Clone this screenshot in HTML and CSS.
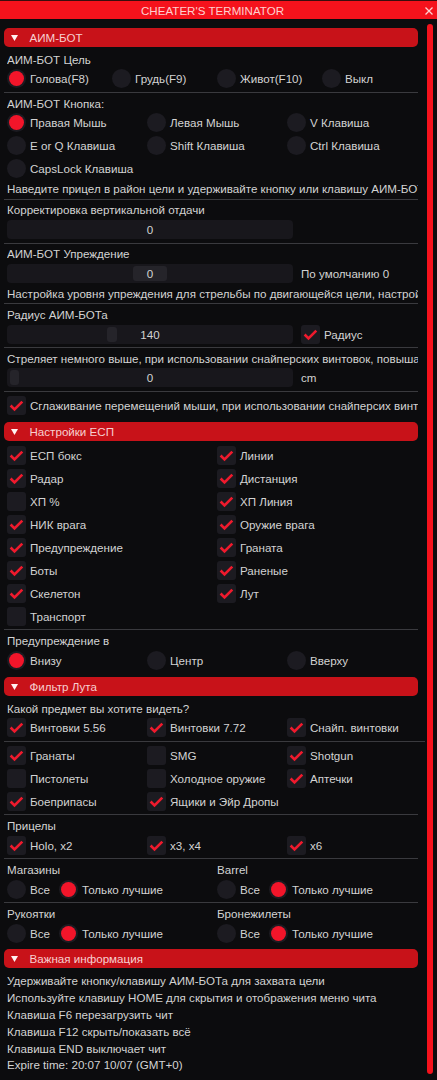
FILE: index.html
```html
<!DOCTYPE html>
<html lang="ru">
<head>
<meta charset="utf-8">
<title>CHEATER'S TERMINATOR</title>
<link rel="stylesheet" href="styles.css">
</head>
<body>
<div class="win">
  <div class="titlebar">
    <span class="title">CHEATER'S TERMINATOR</span>
    <svg class="close" width="8" height="8" viewBox="0 0 8 8"><path d="M0.5 0.5 L7.5 7.5 M7.5 0.5 L0.5 7.5" stroke="#ffd2d2" stroke-width="1.3" fill="none"/></svg>
  </div>
  <div class="body">
    <div class="content">

      <div class="hdr first"><svg class="arrow" width="7" height="6" viewBox="0 0 7 6"><polygon points="0,0 7,0 3.5,6" fill="#fff2f2"/></svg><span class="hdr-text">АИМ-БОТ</span></div>
      <div class="label after-hdr">АИМ-БОТ Цель</div>
      <div class="row c4">
        <div class="opt"><span class="radio on"></span>Голова(F8)</div>
        <div class="opt"><span class="radio"></span>Грудь(F9)</div>
        <div class="opt"><span class="radio"></span>Живот(F10)</div>
        <div class="opt"><span class="radio"></span>Выкл</div>
      </div>
      <div class="sep"></div>
      <div class="label">АИМ-БОТ Кнопка:</div>
      <div class="grid c3">
        <div class="opt"><span class="radio on"></span>Правая Мышь</div>
        <div class="opt"><span class="radio"></span>Левая Мышь</div>
        <div class="opt"><span class="radio"></span>V Клавиша</div>
        <div class="opt"><span class="radio"></span>E or Q Клавиша</div>
        <div class="opt"><span class="radio"></span>Shift Клавиша</div>
        <div class="opt"><span class="radio"></span>Ctrl Клавиша</div>
        <div class="opt"><span class="radio"></span>CapsLock Клавиша</div>
      </div>
      <div class="label">Наведите прицел в район цели и удерживайте кнопку или клавишу АИМ-БОТа для захвата цели</div>
      <div class="sep"></div>
      <div class="label">Корректировка вертикальной отдачи</div>
      <div class="slider-row">
        <div class="slider"><span class="val">0</span></div>
      </div>
      <div class="sep"></div>
      <div class="label">АИМ-БОТ Упреждение</div>
      <div class="slider-row">
        <div class="slider"><span class="grab" style="left:126px;width:34px"></span><span class="val">0</span></div>
        <span class="side">По умолчанию 0</span>
      </div>
      <div class="label">Настройка уровня упреждения для стрельбы по двигающейся цели, настройте под себя</div>
      <div class="sep"></div>
      <div class="label">Радиус АИМ-БОТа</div>
      <div class="slider-row">
        <div class="slider"><span class="grab" style="left:100px;width:10px"></span><span class="val">140</span></div>
        <div class="opt"><span class="cb"><svg width="19" height="19" viewBox="0 0 19 19"><polyline points="3.6,9.5 7.5,13.4 15.3,5.6" fill="none" stroke="#ef1a2d" stroke-width="2.6"/></svg></span>Радиус</div>
      </div>
      <div class="sep"></div>
      <div class="label">Стреляет немного выше, при использовании снайперских винтовок, повышайте значение</div>
      <div class="slider-row">
        <div class="slider"><span class="grab" style="left:3px;width:9px"></span><span class="val">0</span></div>
        <span class="side">cm</span>
      </div>
      <div class="sep"></div>
      <div class="row">
        <div class="opt clip"><span class="cb"><svg width="19" height="19" viewBox="0 0 19 19"><polyline points="3.6,9.5 7.5,13.4 15.3,5.6" fill="none" stroke="#ef1a2d" stroke-width="2.6"/></svg></span>Сглаживание перемещений мыши, при использовании снайперсих винтовок</div>
      </div>

      <div class="hdr"><svg class="arrow" width="7" height="6" viewBox="0 0 7 6"><polygon points="0,0 7,0 3.5,6" fill="#fff2f2"/></svg><span class="hdr-text">Настройки ЕСП</span></div>
      <div class="grid c2 esp">
        <div class="opt"><span class="cb"><svg width="19" height="19" viewBox="0 0 19 19"><polyline points="3.6,9.5 7.5,13.4 15.3,5.6" fill="none" stroke="#ef1a2d" stroke-width="2.6"/></svg></span>ЕСП бокс</div>
        <div class="opt"><span class="cb"><svg width="19" height="19" viewBox="0 0 19 19"><polyline points="3.6,9.5 7.5,13.4 15.3,5.6" fill="none" stroke="#ef1a2d" stroke-width="2.6"/></svg></span>Линии</div>
        <div class="opt"><span class="cb"><svg width="19" height="19" viewBox="0 0 19 19"><polyline points="3.6,9.5 7.5,13.4 15.3,5.6" fill="none" stroke="#ef1a2d" stroke-width="2.6"/></svg></span>Радар</div>
        <div class="opt"><span class="cb"><svg width="19" height="19" viewBox="0 0 19 19"><polyline points="3.6,9.5 7.5,13.4 15.3,5.6" fill="none" stroke="#ef1a2d" stroke-width="2.6"/></svg></span>Дистанция</div>
        <div class="opt"><span class="cb"></span>ХП %</div>
        <div class="opt"><span class="cb"><svg width="19" height="19" viewBox="0 0 19 19"><polyline points="3.6,9.5 7.5,13.4 15.3,5.6" fill="none" stroke="#ef1a2d" stroke-width="2.6"/></svg></span>ХП Линия</div>
        <div class="opt"><span class="cb"><svg width="19" height="19" viewBox="0 0 19 19"><polyline points="3.6,9.5 7.5,13.4 15.3,5.6" fill="none" stroke="#ef1a2d" stroke-width="2.6"/></svg></span>НИК врага</div>
        <div class="opt"><span class="cb"><svg width="19" height="19" viewBox="0 0 19 19"><polyline points="3.6,9.5 7.5,13.4 15.3,5.6" fill="none" stroke="#ef1a2d" stroke-width="2.6"/></svg></span>Оружие врага</div>
        <div class="opt"><span class="cb"><svg width="19" height="19" viewBox="0 0 19 19"><polyline points="3.6,9.5 7.5,13.4 15.3,5.6" fill="none" stroke="#ef1a2d" stroke-width="2.6"/></svg></span>Предупреждение</div>
        <div class="opt"><span class="cb"><svg width="19" height="19" viewBox="0 0 19 19"><polyline points="3.6,9.5 7.5,13.4 15.3,5.6" fill="none" stroke="#ef1a2d" stroke-width="2.6"/></svg></span>Граната</div>
        <div class="opt"><span class="cb"><svg width="19" height="19" viewBox="0 0 19 19"><polyline points="3.6,9.5 7.5,13.4 15.3,5.6" fill="none" stroke="#ef1a2d" stroke-width="2.6"/></svg></span>Боты</div>
        <div class="opt"><span class="cb"><svg width="19" height="19" viewBox="0 0 19 19"><polyline points="3.6,9.5 7.5,13.4 15.3,5.6" fill="none" stroke="#ef1a2d" stroke-width="2.6"/></svg></span>Раненые</div>
        <div class="opt"><span class="cb"><svg width="19" height="19" viewBox="0 0 19 19"><polyline points="3.6,9.5 7.5,13.4 15.3,5.6" fill="none" stroke="#ef1a2d" stroke-width="2.6"/></svg></span>Скелетон</div>
        <div class="opt"><span class="cb"><svg width="19" height="19" viewBox="0 0 19 19"><polyline points="3.6,9.5 7.5,13.4 15.3,5.6" fill="none" stroke="#ef1a2d" stroke-width="2.6"/></svg></span>Лут</div>
        <div class="opt"><span class="cb"></span>Транспорт</div>
      </div>
      <div class="sep"></div>
      <div class="label">Предупреждение в</div>
      <div class="row c3">
        <div class="opt"><span class="radio on"></span>Внизу</div>
        <div class="opt"><span class="radio"></span>Центр</div>
        <div class="opt"><span class="radio"></span>Вверху</div>
      </div>

      <div class="hdr"><svg class="arrow" width="7" height="6" viewBox="0 0 7 6"><polygon points="0,0 7,0 3.5,6" fill="#fff2f2"/></svg><span class="hdr-text">Фильтр Лута</span></div>
      <div class="label after-hdr">Какой предмет вы хотите видеть?</div>
      <div class="row c3">
        <div class="opt"><span class="cb"><svg width="19" height="19" viewBox="0 0 19 19"><polyline points="3.6,9.5 7.5,13.4 15.3,5.6" fill="none" stroke="#ef1a2d" stroke-width="2.6"/></svg></span>Винтовки 5.56</div>
        <div class="opt"><span class="cb"><svg width="19" height="19" viewBox="0 0 19 19"><polyline points="3.6,9.5 7.5,13.4 15.3,5.6" fill="none" stroke="#ef1a2d" stroke-width="2.6"/></svg></span>Винтовки 7.72</div>
        <div class="opt"><span class="cb"><svg width="19" height="19" viewBox="0 0 19 19"><polyline points="3.6,9.5 7.5,13.4 15.3,5.6" fill="none" stroke="#ef1a2d" stroke-width="2.6"/></svg></span>Снайп. винтовки</div>
      </div>
      <div class="sep wide"></div>
      <div class="grid c3">
        <div class="opt"><span class="cb"><svg width="19" height="19" viewBox="0 0 19 19"><polyline points="3.6,9.5 7.5,13.4 15.3,5.6" fill="none" stroke="#ef1a2d" stroke-width="2.6"/></svg></span>Гранаты</div>
        <div class="opt"><span class="cb"></span>SMG</div>
        <div class="opt"><span class="cb"><svg width="19" height="19" viewBox="0 0 19 19"><polyline points="3.6,9.5 7.5,13.4 15.3,5.6" fill="none" stroke="#ef1a2d" stroke-width="2.6"/></svg></span>Shotgun</div>
        <div class="opt"><span class="cb"></span>Пистолеты</div>
        <div class="opt"><span class="cb"></span>Холодное оружие</div>
        <div class="opt"><span class="cb"><svg width="19" height="19" viewBox="0 0 19 19"><polyline points="3.6,9.5 7.5,13.4 15.3,5.6" fill="none" stroke="#ef1a2d" stroke-width="2.6"/></svg></span>Аптечки</div>
        <div class="opt"><span class="cb"><svg width="19" height="19" viewBox="0 0 19 19"><polyline points="3.6,9.5 7.5,13.4 15.3,5.6" fill="none" stroke="#ef1a2d" stroke-width="2.6"/></svg></span>Боеприпасы</div>
        <div class="opt"><span class="cb"><svg width="19" height="19" viewBox="0 0 19 19"><polyline points="3.6,9.5 7.5,13.4 15.3,5.6" fill="none" stroke="#ef1a2d" stroke-width="2.6"/></svg></span>Ящики и Эйр Дропы</div>
      </div>
      <div class="sep"></div>
      <div class="label">Прицелы</div>
      <div class="row c3">
        <div class="opt"><span class="cb"><svg width="19" height="19" viewBox="0 0 19 19"><polyline points="3.6,9.5 7.5,13.4 15.3,5.6" fill="none" stroke="#ef1a2d" stroke-width="2.6"/></svg></span>Holo, x2</div>
        <div class="opt"><span class="cb"><svg width="19" height="19" viewBox="0 0 19 19"><polyline points="3.6,9.5 7.5,13.4 15.3,5.6" fill="none" stroke="#ef1a2d" stroke-width="2.6"/></svg></span>x3, x4</div>
        <div class="opt"><span class="cb"><svg width="19" height="19" viewBox="0 0 19 19"><polyline points="3.6,9.5 7.5,13.4 15.3,5.6" fill="none" stroke="#ef1a2d" stroke-width="2.6"/></svg></span>x6</div>
      </div>
      <div class="sep"></div>
      <div class="labels c2"><span>Магазины</span><span>Barrel</span></div>
      <div class="row c2">
        <div class="pair"><div class="opt"><span class="radio"></span>Все</div><div class="opt"><span class="radio on"></span>Только лучшие</div></div>
        <div class="pair"><div class="opt"><span class="radio"></span>Все</div><div class="opt"><span class="radio on"></span>Только лучшие</div></div>
      </div>
      <div class="sep"></div>
      <div class="labels c2"><span>Рукоятки</span><span>Бронежилеты</span></div>
      <div class="row c2">
        <div class="pair"><div class="opt"><span class="radio"></span>Все</div><div class="opt"><span class="radio on"></span>Только лучшие</div></div>
        <div class="pair"><div class="opt"><span class="radio"></span>Все</div><div class="opt"><span class="radio on"></span>Только лучшие</div></div>
      </div>

      <div class="hdr last"><svg class="arrow" width="7" height="6" viewBox="0 0 7 6"><polygon points="0,0 7,0 3.5,6" fill="#fff2f2"/></svg><span class="hdr-text">Важная информация</span></div>
      <div class="info">
        <div class="label">Удерживайте кнопку/клавишу АИМ-БОТа для захвата цели</div>
        <div class="label">Используйте клавишу HOME для скрытия и отображения меню чита</div>
        <div class="label">Клавиша F6 перезагрузить чит</div>
        <div class="label">Клавиша F12 скрыть/показать всё</div>
        <div class="label">Клавиша END выключает чит</div>
        <div class="label">Expire time: 20:07 10/07 (GMT+0)</div>
      </div>

    </div>
    <div class="scroll"></div>
  </div>
</div>
</body>
</html>
```

FILE: styles.css
```css
html, body {
  margin: 0;
  padding: 0;
  background: #0c0c0e;
}

body {
  font-family: "Liberation Sans", Arial, sans-serif;
  font-size: 11.6px;
  color: #d3d3d3;
}

.win {
  width: 437px;
  height: 1080px;
  overflow: hidden;
  background: #0c0c0e;
}

.titlebar {
  height: 18px;
  border-top: 1px solid #3a0d0d;
  background: #f5121c;
  display: flex;
  color: #ffd0d0;
}

.title {
  flex: 1;
  text-align: center;
  line-height: 20px;
  height: 18px;
  overflow: hidden;
  white-space: nowrap;
}

.close {
  flex: none;
  margin-top: 6px;
  margin-right: 4px;
}

.body {
  display: flex;
}

.content {
  width: 414px;
  margin-left: 4px;
  padding-top: 9px;
  display: flex;
  flex-direction: column;
  gap: 3.67px;
}

.scroll {
  flex: none;
  width: 6px;
  height: 1050px;
  margin-left: 9px;
  margin-top: 5px;
  background: #f5121c;
  border-radius: 3px;
}

.hdr {
  height: 19px;
  background: #c81219;
  border-radius: 5px;
  display: flex;
  align-items: center;
  color: #f7cfd0;
  line-height: 19px;
  margin-top: 3.7px;
  white-space: nowrap;
}

.hdr.first {
  margin-top: 0;
}

.hdr.last {
  margin-top: 3px;
}

.arrow {
  flex: none;
  margin-left: 7px;
}

.hdr-text {
  margin-left: 11.5px;
}

.label {
  margin-left: 3px;
  height: 13px;
  line-height: 13px;
  white-space: nowrap;
  overflow: hidden;
}

.after-hdr {
  margin-top: 2px;
}

.labels {
  margin-left: 3px;
  display: grid;
  height: 13px;
  line-height: 13px;
  white-space: nowrap;
}

.row {
  margin-left: 3px;
  display: grid;
  height: 19px;
  overflow: hidden;
}

.grid {
  margin-left: 3px;
  display: grid;
  row-gap: 4px;
  grid-auto-rows: 19px;
}

.esp {
  margin-top: 1px;
}

.c4 {
  grid-template-columns: repeat(4, 105px);
}

.c3 {
  grid-template-columns: repeat(3, 140px);
}

.c2 {
  grid-template-columns: repeat(2, 210px);
}

.opt {
  display: flex;
  align-items: center;
  gap: 4px;
  white-space: nowrap;
  line-height: 19px;
  height: 19px;
}

.clip {
  overflow: hidden;
}

.pair {
  display: flex;
  gap: 9px;
}

.radio {
  flex: none;
  width: 19px;
  height: 19px;
  border-radius: 50%;
  background: #1c1b21;
  display: flex;
  align-items: center;
  justify-content: center;
}

.radio.on::after {
  content: "";
  width: 15px;
  height: 15px;
  border-radius: 50%;
  background: #f2152a;
}

.cb {
  flex: none;
  width: 19px;
  height: 19px;
  border-radius: 3px;
  background: #1c1b21;
}

.cb svg {
  display: block;
}

.sep {
  height: 1px;
  background: #3a3a3e;
}

.sep.wide {
  margin-right: -7px;
}

.slider-row {
  margin-left: 3px;
  display: flex;
  align-items: center;
  gap: 8px;
  height: 19px;
  white-space: nowrap;
}

.slider {
  flex: none;
  width: 286px;
  height: 19px;
  border-radius: 4px;
  background: #18171c;
  position: relative;
  text-align: center;
  line-height: 19px;
}

.grab {
  position: absolute;
  top: 2px;
  bottom: 2px;
  background: #25242a;
  border-radius: 3px;
}

.val {
  position: relative;
}

.info {
  display: flex;
  flex-direction: column;
  gap: 3.9px;
  margin-top: 2px;
}
```
